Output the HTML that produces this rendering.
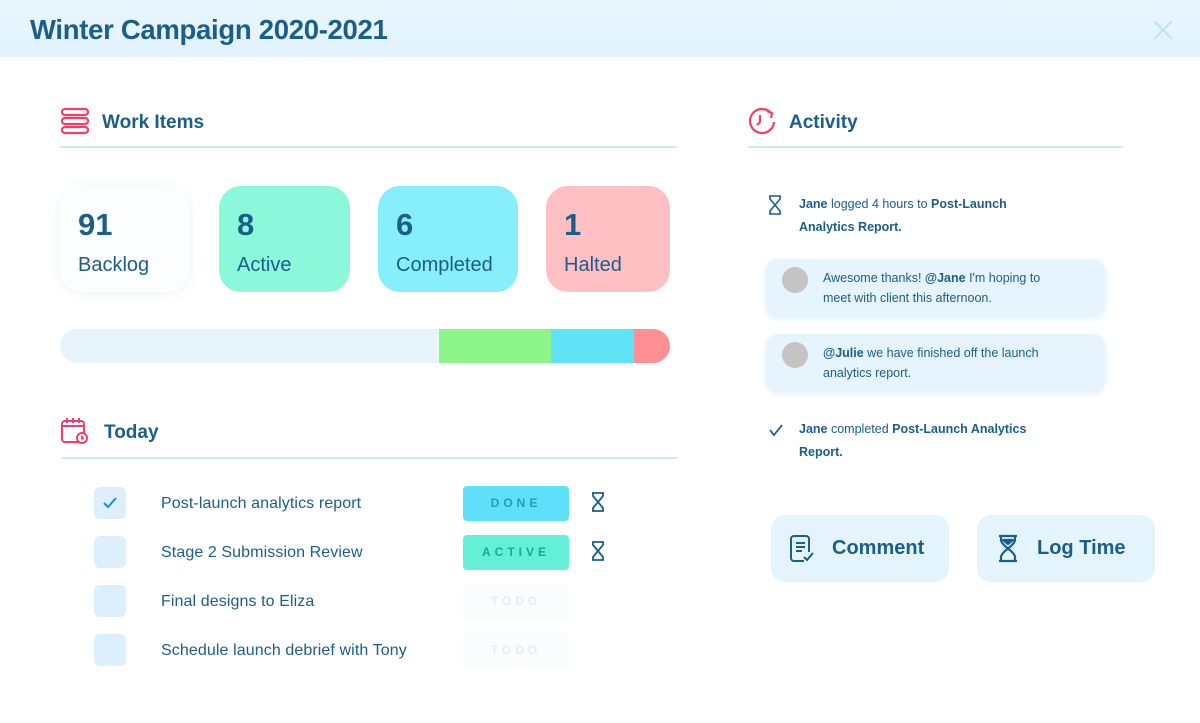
<!DOCTYPE html>
<html><head><meta charset="utf-8"><style>
*{margin:0;padding:0;box-sizing:border-box}
body{width:1200px;height:723px;background:#fff;font-family:"Liberation Sans",sans-serif;color:#1b5e8c;position:relative;overflow:hidden}
.a{position:absolute}
.hdr{left:0;top:0;width:1200px;height:57px;background:linear-gradient(#e9f6fe,#e1f2fc)}
.title{left:30px;top:14px;font-size:27.5px;font-weight:bold;letter-spacing:-0.3px}
.h2{font-size:19px;font-weight:bold}
.line{height:2px;background:#cde9f8}
.card{top:186px;height:106px;border-radius:22px;padding:21px 0 0 18px}
.card b{display:block;font-size:31px}
.card span{display:block;font-size:20px;margin-top:11px}
.cb{left:94px;width:32px;height:32px;border-radius:6px;background:#dbeffc}
.task{left:161px;font-size:16px;letter-spacing:0.1px}
.badge{left:463px;width:106px;height:35px;border-radius:4px;font-size:12px;letter-spacing:4px;text-align:center;line-height:35px;font-weight:bold}
.act{font-size:12.5px;line-height:23px;left:799px;width:260px}
.bub{left:766px;width:339px;height:58px;border-radius:12px;background:#e6f4fd;box-shadow:0 2px 6px rgba(180,215,240,.4)}
.av{left:16px;top:8px;width:26px;height:26px;border-radius:50%;background:#c4c4c4}
.bub p{position:absolute;left:57px;top:9px;font-size:12.5px;line-height:20px;width:245px}
.btn{top:515px;height:67px;border-radius:14px;background:#e4f4fd;font-size:20px;font-weight:bold;line-height:67px}
</style></head><body>
<div class="a hdr"></div>
<div class="a title">Winter Campaign 2020-2021</div>
<svg class="a" style="left:1152px;top:19px" width="22" height="22" viewBox="0 0 22 22"><path d="M2 2L20 20M20 2L2 20" stroke="#bfe3f7" stroke-width="2"/></svg>

<svg class="a" style="left:61px;top:107px" width="28" height="28" viewBox="0 0 28 28" fill="none" stroke="#f0406a" stroke-width="2.2"><rect x="1" y="2" width="26" height="6" rx="3"/><rect x="1" y="11" width="26" height="6" rx="3"/><rect x="1" y="20" width="26" height="6" rx="3"/></svg>
<div class="a h2" style="left:102px;top:112px">Work Items</div>
<div class="a line" style="left:60px;top:146px;width:617px"></div>

<div class="a card" style="left:60px;width:130px;background:#fbfdff;box-shadow:0 2px 10px rgba(200,220,235,.35)"><b>91</b><span>Backlog</span></div>
<div class="a card" style="left:219px;width:131px;background:#8cf8da"><b>8</b><span>Active</span></div>
<div class="a card" style="left:378px;width:140px;background:#87eefb"><b>6</b><span>Completed</span></div>
<div class="a card" style="left:546px;width:124px;background:#ffbfc3"><b>1</b><span>Halted</span></div>

<div class="a" style="left:60px;top:329px;width:610px;height:34px;border-radius:17px;overflow:hidden;background:#e8f4fc">
<div class="a" style="left:379px;top:0;width:112px;height:34px;background:#8df58a"></div>
<div class="a" style="left:491px;top:0;width:83px;height:34px;background:#5fe3f7"></div>
<div class="a" style="left:574px;top:0;width:36px;height:34px;background:#ff8f95"></div>
</div>

<svg class="a" style="left:61px;top:417px" width="28" height="28" viewBox="0 0 28 28" fill="none" stroke="#f0406a" stroke-width="2"><rect x="1" y="4" width="22" height="21" rx="3"/><path d="M6 1v5M12 1v5M18 1v5M1 9h22"/><circle cx="21" cy="21" r="5" fill="#fff"/><path d="M21 18.5v3h2"/></svg>
<div class="a h2" style="left:104px;top:422px">Today</div>
<div class="a line" style="left:62px;top:457px;width:615px"></div>

<div class="a cb" style="top:487px"><svg width="32" height="32"><path d="M10 16l4 4 8-9" stroke="#2d86c8" stroke-width="2" fill="none"/></svg></div>
<div class="a cb" style="top:536px"></div>
<div class="a cb" style="top:585px"></div>
<div class="a cb" style="top:634px"></div>
<div class="a task" style="top:495px">Post-launch analytics report</div>
<div class="a task" style="top:544px">Stage 2 Submission Review</div>
<div class="a task" style="top:593px">Final designs to Eliza</div>
<div class="a task" style="top:642px">Schedule launch debrief with Tony</div>
<div class="a badge" style="top:486px;background:#5fe0fa;color:#2a9bb0">DONE</div>
<div class="a badge" style="top:535px;background:#63f0d7;color:#1fa98f">ACTIVE</div>
<div class="a badge" style="top:584px;background:#fafcfe;color:#e2eef6">TODO</div>
<div class="a badge" style="top:633px;background:#fafcfe;color:#e2eef6">TODO</div>
<svg class="a" style="left:590px;top:492px" width="16" height="20" viewBox="0 0 16 20" fill="none" stroke="#1b5e8c" stroke-width="1.8" stroke-linejoin="round"><path d="M2 1h12M2 19h12M3 1v3l5 6-5 6v3M13 1v3l-5 6 5 6v3"/></svg>
<svg class="a" style="left:590px;top:541px" width="16" height="20" viewBox="0 0 16 20" fill="none" stroke="#1b5e8c" stroke-width="1.8" stroke-linejoin="round"><path d="M2 1h12M2 19h12M3 1v3l5 6-5 6v3M13 1v3l-5 6 5 6v3"/></svg>

<svg class="a" style="left:747px;top:106px" width="30" height="30" viewBox="0 0 30 30" fill="none" stroke="#f0406a" stroke-width="2.2"><path d="M24 7A12 12 0 1 0 27 16"/><path d="M20 5l5 2-1 5"/><path d="M13 9v7l-3 3"/></svg>
<div class="a h2" style="left:789px;top:112px">Activity</div>
<div class="a line" style="left:748px;top:146px;width:375px"></div>

<svg class="a" style="left:767px;top:195px" width="16" height="20" viewBox="0 0 16 20" fill="none" stroke="#1b5e8c" stroke-width="1.6" stroke-linejoin="round"><path d="M2 1h12M2 19h12M3 1v3l5 6-5 6v3M13 1v3l-5 6 5 6v3"/></svg>
<div class="a act" style="top:193px"><b>Jane</b> logged 4 hours to <b>Post-Launch Analytics Report.</b></div>
<div class="a bub" style="top:259px"><div class="a av"></div><p>Awesome thanks! <b>@Jane</b> I'm hoping to meet with client this afternoon.</p></div>
<div class="a bub" style="top:334px"><div class="a av"></div><p><b>@Julie</b> we have finished off the launch analytics report.</p></div>
<svg class="a" style="left:768px;top:423px" width="16" height="14"><path d="M2 7l4 5 8-10" stroke="#1b5e8c" stroke-width="1.8" fill="none"/></svg>
<div class="a act" style="top:418px;width:260px"><b>Jane</b> completed <b>Post-Launch Analytics Report.</b></div>

<div class="a btn" style="left:771px;width:178px"><svg class="a" style="left:19px;top:20px" width="26" height="28" viewBox="0 0 26 28" fill="none" stroke="#1b5e8c" stroke-width="2"><path d="M14 26H4a3 3 0 0 1-3-3V4a3 3 0 0 1 3-3h12a3 3 0 0 1 3 3v13"/><path d="M6 8h9M6 12h9M6 16h6"/><path d="M14 22l3 3 6-7"/></svg><span class="a" style="left:61px;top:0">Comment</span></div>
<div class="a btn" style="left:977px;width:178px"><svg class="a" style="left:20px;top:19px" width="22" height="29" viewBox="0 0 22 29" fill="none" stroke="#1b5e8c" stroke-width="2.2" stroke-linejoin="round"><path d="M2 2h18M2 27h18M4 2v4q0 3 7 8.5q-7 5.5-7 8.5v4M18 2v4q0 3-7 8.5q7 5.5 7 8.5v4"/><path d="M6 6h10l-5 4z" fill="#1b5e8c"/></svg><span class="a" style="left:60px;top:0">Log Time</span></div>
</body></html>
